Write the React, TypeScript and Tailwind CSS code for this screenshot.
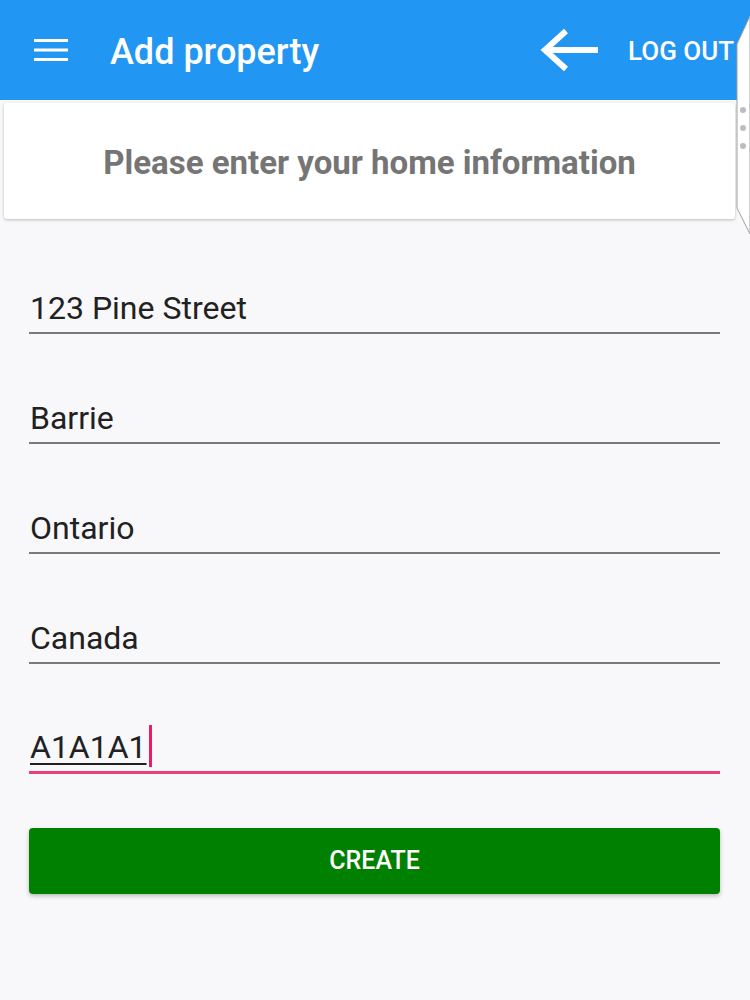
import React from "react";

const fields = ["123 Pine Street", "Barrie", "Ontario", "Canada"];

export default function App() {
  return (
    <div
      className="relative w-[750px] h-[1000px] bg-[#f8f8fa] overflow-hidden"
      style={{ fontFamily: "Roboto, 'Noto Sans', sans-serif" }}
    >
      <header className="h-[100px] bg-[#2196f3] flex items-center text-white">
        <div className="w-[110px] flex items-center pl-[34px]">
          <svg width="34" height="24" viewBox="0 0 34 24">
            <rect x="0" y="1" width="34" height="3" fill="white" />
            <rect x="0" y="10.5" width="34" height="3" fill="white" />
            <rect x="0" y="20" width="34" height="3" fill="white" />
          </svg>
        </div>
        <div className="text-[36px] font-medium flex-1 pt-[4px]">Add property</div>
        <svg width="60" height="44" viewBox="0 0 60 44" className="mr-[28px]">
          <path d="M58 22 H6 M26 3 L5 22 L26 41" stroke="white" strokeWidth="6" fill="none" strokeLinejoin="miter" />
        </svg>
        <div className="text-[26px] font-medium w-[122px] pt-[2px]">LOG OUT</div>
      </header>

      <div className="mx-[4px] mt-[3px] h-[116px] w-[731px] bg-white rounded-[3px] shadow-[0_1px_3px_rgba(0,0,0,0.25)] flex items-center justify-center">
        <div className="text-[33px] font-bold text-[#757575] pt-[4px]">Please enter your home information</div>
      </div>

      <div className="px-[29px] pt-[5px] flex flex-col">
        {fields.map((f) => (
          <div key={f} className="h-[110px] flex flex-col justify-end">
            <div className="text-[32px] text-[#212121] leading-none pb-[8px] pl-[1px]">{f}</div>
            <div className="h-[2px] w-[691px] bg-[#7a7a7a]" />
          </div>
        ))}
        <div className="h-[110px] flex flex-col justify-end">
          <div className="flex items-end pb-[8px] pl-[1px]">
            <span className="text-[32px] text-[#212121] leading-none underline decoration-[2px] underline-offset-[5px]">A1A1A1</span>
            <span className="w-[3px] h-[42px] bg-[#e91e63] ml-[2px] mb-[-4px]" />
          </div>
          <div className="h-[3px] w-[691px] bg-[#e8407a]" />
        </div>
        <button className="mt-[54px] h-[66px] w-[691px] bg-[#008000] rounded-[4px] shadow-[0_2px_4px_rgba(0,0,0,0.25)] text-white text-[25px] font-medium">
          CREATE
        </button>
      </div>

      <svg className="absolute top-0 right-0" width="16" height="260" viewBox="0 0 16 260">
        <path d="M16 16 L3 44 L3 208 L16 234 Z" fill="white" stroke="#9e9e9e" strokeWidth="1" />
        <circle cx="9" cy="110" r="3" fill="#bdbdbd" />
        <circle cx="9" cy="128" r="3" fill="#bdbdbd" />
        <circle cx="9" cy="146" r="3" fill="#bdbdbd" />
      </svg>
    </div>
  );
}
